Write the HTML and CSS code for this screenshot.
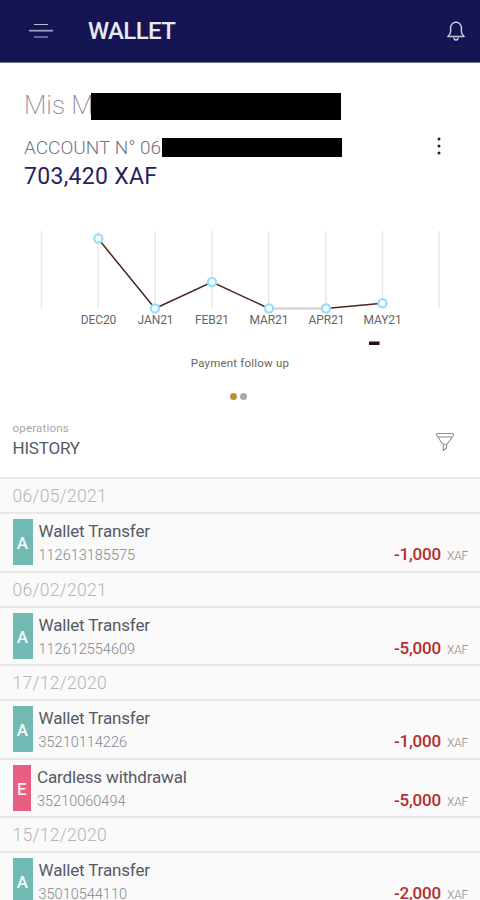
FILE: index.html
```html
<!DOCTYPE html>
<html lang="en">
<head>
    <meta charset="UTF-8">
    <meta name="viewport" content="width=device-width, initial-scale=1.0">
    <title>Wallet</title>
    <link rel="stylesheet" href="styles.css">
</head>
<body>
    <header class="topbar">
        <svg class="menu-icon" width="24" height="16" viewBox="0 0 24 16">
            <path d="M5 1.5H19M5 14H19" stroke="#b9b9d2" stroke-width="1.2"/>
            <path d="M0 7.7H24" stroke="#9c9cbc" stroke-width="1.8"/>
        </svg>
        <h1>WALLET</h1>
        <svg class="bell-icon" width="20" height="22" viewBox="0 0 20 22">
            <path d="M10 1.2V2.5M10 2.3C6.7 2.3 4.6 4.7 4.6 8V11.5C4.6 13.6 3.6 14.6 1.9 16.6H18.1C16.4 14.6 15.4 13.6 15.4 11.5V8C15.4 4.7 13.3 2.3 10 2.3Z" fill="none" stroke="#c3c3d8" stroke-width="1.5" stroke-linejoin="round"/>
            <path d="M8 17.5C8 20.8 12 20.8 12 17.5" fill="none" stroke="#c3c3d8" stroke-width="1.5"/>
        </svg>
    </header>
    <main>
        <section class="account">
            <div class="name">
                <span>Mis M</span>
                <div class="mask"></div>
            </div>
            <div class="number">
                <span>ACCOUNT N° 06</span>
                <div class="mask"></div>
                <svg class="more-icon" width="6" height="20" viewBox="0 0 6 20">
                    <circle cx="3" cy="2" r="1.5"/>
                    <circle cx="3" cy="9" r="1.5"/>
                    <circle cx="3" cy="16" r="1.5"/>
                </svg>
            </div>
            <div class="balance">703,420 XAF</div>
        </section>
        <section class="chart">
            <svg width="480" height="126" viewBox="0 226 480 126">
                <path class="grid" d="M41.5 231V308M98 231V308M155 231V308M212 231V308M268.5 231V308M326 231V308M382.5 231V308M439 231V308"/>
                <path class="flat" d="M269 308.5H326"/>
                <path class="line" d="M98 238.5L155 308.5L212 282L269 308.5M326 308.5L382.5 303.3"/>
                <g class="dots">
                    <circle cx="98.3" cy="238.5" r="4.1"/>
                    <circle cx="155" cy="308.5" r="4.1"/>
                    <circle cx="212" cy="282" r="4.1"/>
                    <circle cx="269" cy="308.5" r="4.1"/>
                    <circle cx="326" cy="308.5" r="4.1"/>
                    <circle cx="382.5" cy="303.3" r="4.1"/>
                </g>
                <g class="labels">
                    <text x="98.5" y="324">DEC20</text>
                    <text x="155.5" y="324">JAN21</text>
                    <text x="212" y="324">FEB21</text>
                    <text x="269" y="324">MAR21</text>
                    <text x="326.5" y="324">APR21</text>
                    <text x="382.5" y="324">MAY21</text>
                </g>
                <rect class="legend" x="369" y="341.5" width="10.5" height="3.5"/>
            </svg>
            <p class="caption">Payment follow up</p>
            <div class="pager">
                <span class="active"></span>
                <span></span>
            </div>
        </section>
        <section class="history-head">
            <div>
                <p class="small">operations</p>
                <h2>HISTORY</h2>
            </div>
            <svg class="filter-icon" width="20" height="20" viewBox="0 0 20 20">
                <path d="M2.6 1.5H17.4C18.6 1.5 18.8 2.8 18 4L12 12.3H8L2 4C1.2 2.8 1.4 1.5 2.6 1.5ZM2.6 5H17.4M8.3 12.3V18.5L11.6 16V12.3"/>
            </svg>
        </section>
        <section class="history">
            <div class="date">06/05/2021</div>
            <div class="item">
                <div class="tag">A</div>
                <div class="info"><p class="title">Wallet Transfer</p><p class="ref">112613185575</p></div>
                <div class="amount">-1,000 <span>XAF</span></div>
            </div>
            <div class="date">06/02/2021</div>
            <div class="item">
                <div class="tag">A</div>
                <div class="info"><p class="title">Wallet Transfer</p><p class="ref">112612554609</p></div>
                <div class="amount">-5,000 <span>XAF</span></div>
            </div>
            <div class="date">17/12/2020</div>
            <div class="item">
                <div class="tag">A</div>
                <div class="info"><p class="title">Wallet Transfer</p><p class="ref">35210114226</p></div>
                <div class="amount">-1,000 <span>XAF</span></div>
            </div>
            <div class="item">
                <div class="tag withdrawal">E</div>
                <div class="info"><p class="title">Cardless withdrawal</p><p class="ref">35210060494</p></div>
                <div class="amount">-5,000 <span>XAF</span></div>
            </div>
            <div class="date">15/12/2020</div>
            <div class="item">
                <div class="tag">A</div>
                <div class="info"><p class="title">Wallet Transfer</p><p class="ref">35010544110</p></div>
                <div class="amount">-2,000 <span>XAF</span></div>
            </div>
        </section>
    </main>
</body>
</html>
```
FILE: styles.css
```css
* {
    box-sizing: border-box;
}

body, html {
    height: 100%;
    margin: 0;
    padding: 0;
    font-family: Roboto, sans-serif;
    background: #fff;
    color: #4a4f5c;
    overflow: hidden;
}

h1, h2, p {
    margin: 0;
}

svg {
    display: block;
    flex: none;
}

.topbar {
    height: 63px;
    padding: 0 14px 0 29px;
    display: flex;
    align-items: center;
    background-color: #161553;
    border-bottom: 1px solid #77779a;
}

.topbar h1 {
    flex: 1;
    margin-left: 35px;
    font-size: 24px;
    font-weight: 500;
    letter-spacing: -0.6px;
    line-height: 62px;
    color: #e9e9f2;
}

/* account */
.account {
    height: 163px;
    padding: 30px 38px 0 24px;
}

.name, .number {
    display: flex;
    align-items: center;
    white-space: nowrap;
}

.name {
    height: 27px;
    font-size: 26px;
    font-weight: 200;
    color: #8c8c98;
}

.name span {
    width: 67px;
    line-height: 25px;
    padding-bottom: 2px;
}

.mask {
    background: #000;
}

.name .mask {
    width: 250px;
    height: 27px;
}

.number {
    height: 20px;
    margin-top: 17px;
    font-size: 19px;
    font-weight: 300;
    color: #73738a;
}

.number span {
    width: 138px;
}

.number .mask {
    width: 180px;
    height: 19px;
}

.more-icon {
    margin-left: auto;
    fill: #222;
}

.balance {
    margin-top: 6px;
    font-size: 23px;
    letter-spacing: 0.3px;
    line-height: 28px;
    color: #25235f;
}

/* chart */
.chart {
    height: 194px;
}

.grid {
    stroke: #e4e4e4;
    stroke-width: 1.3;
}

.flat {
    stroke: #cfcfcf;
    stroke-width: 2;
}

.line {
    fill: none;
    stroke: #4b2620;
    stroke-width: 1.5;
}

.dots circle {
    fill: #fff;
    stroke: #93e0fb;
    stroke-width: 2.2;
}

.labels text {
    font-size: 12px;
    letter-spacing: -0.1px;
    text-anchor: middle;
    fill: #666;
}

.legend {
    fill: #2a1010;
}

.caption {
    margin-top: 3px;
    font-size: 11.5px;
    letter-spacing: 0.2px;
    line-height: 16px;
    text-align: center;
    color: #666;
}

.pager {
    display: flex;
    justify-content: center;
    gap: 3px;
    margin: 22px 3px 0 0;
}

.pager span {
    width: 7px;
    height: 7px;
    border-radius: 50%;
    background: #a9a9b2;
}

.pager .active {
    background: #b3923a;
}

/* history */
.history-head {
    height: 57px;
    padding: 0 25px 0 12.5px;
    display: flex;
    justify-content: space-between;
}

.small {
    font-size: 11.5px;
    letter-spacing: 0.2px;
    line-height: 16px;
    color: #a3a7b0;
}

.history-head h2 {
    font-size: 17px;
    font-weight: 400;
    letter-spacing: -0.2px;
    line-height: 22px;
    margin-top: 1px;
    color: #555965;
}

.filter-icon {
    margin-top: 12px;
    fill: none;
    stroke: #8b9298;
    stroke-width: 1.1;
    stroke-linejoin: round;
}

.history {
    background: #fafafa;
}

.date, .item {
    padding: 0 12px 0 12.5px;
    border-top: 2px solid #e8e8e8;
}

.date {
    height: 35px;
    font-size: 17.5px;
    font-weight: 300;
    letter-spacing: 0.3px;
    line-height: 35px;
    color: #b5b5b8;
}

.item {
    height: 58.5px;
    padding-top: 5px;
    display: flex;
}

.tag {
    width: 20px;
    height: 46px;
    margin-right: 6px;
    font-size: 17px;
    font-weight: 500;
    line-height: 48px;
    text-align: center;
    color: #f4fbfa;
    background: #70bab3;
}

.tag.withdrawal {
    width: 18.5px;
    color: #fdeef3;
    background: #e85f83;
}

.info {
    flex: 1;
}

.title {
    font-size: 17px;
    letter-spacing: -0.15px;
    line-height: 25px;
    color: #555965;
}

.ref {
    font-size: 14.5px;
    font-weight: 300;
    line-height: 23px;
    color: #85878e;
}

.amount {
    margin-top: 24px;
    font-size: 17px;
    font-weight: 500;
    letter-spacing: -0.2px;
    line-height: 23px;
    color: #b32d2d;
}

.amount span {
    margin-left: 2px;
    font-size: 12px;
    font-weight: 300;
    color: #888;
}
```
